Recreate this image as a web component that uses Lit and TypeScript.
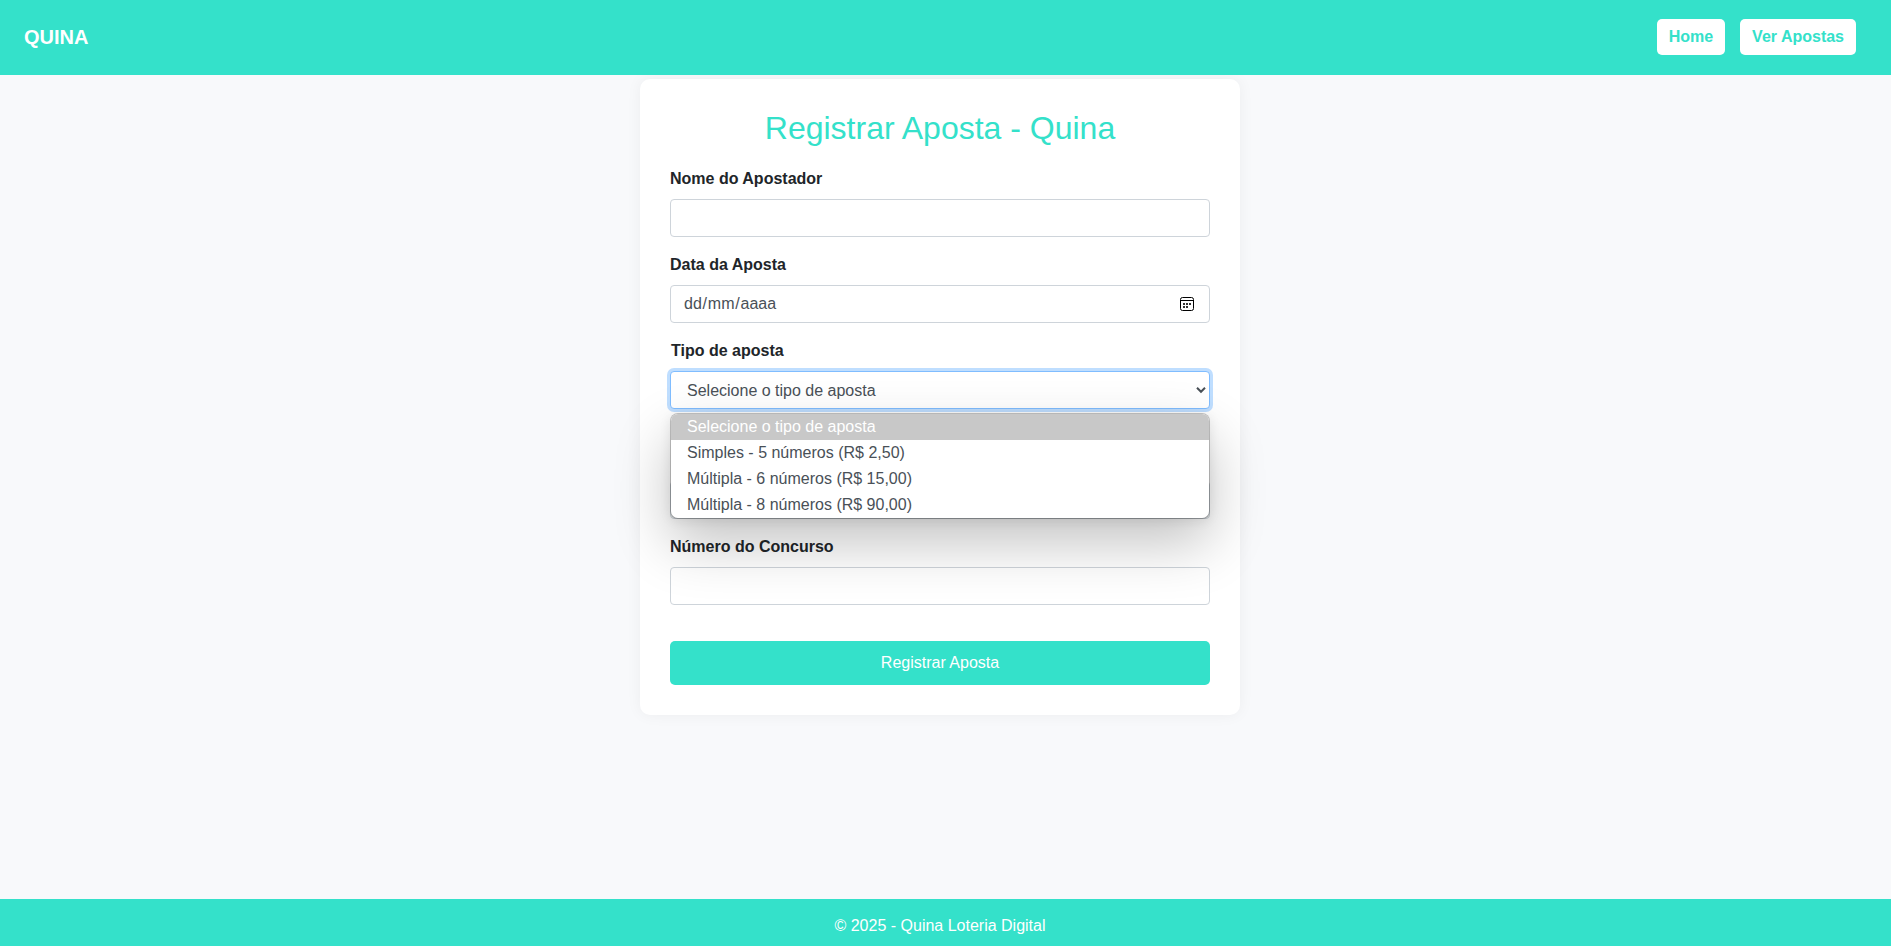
import { LitElement, html, css } from "lit";
import { customElement, state } from "lit/decorators.js";

@customElement("app-root")
export class AppRoot extends LitElement {
  @state() private options = [
    "Selecione o tipo de aposta",
    "Simples - 5 números (R$ 2,50)",
    "Múltipla - 6 números (R$ 15,00)",
    "Múltipla - 8 números (R$ 90,00)",
  ];

  @state() private selected = 0;

  static styles = css`
    :host {
      display: flex;
      flex-direction: column;
      height: 100vh;
      overflow: hidden;
      background: #f8f9fb;
      color: #212529;
      font: 16px/24px "Liberation Sans", Arial, sans-serif;
    }
    * {
      box-sizing: border-box;
    }
    .header {
      flex: none;
      height: 75px;
      padding: 0 35px 1px 24px;
      display: flex;
      align-items: center;
      justify-content: space-between;
      background: #34e1ca;
    }
    .brand {
      color: #fff;
      font-size: 20px;
      font-weight: 700;
    }
    .nav {
      display: flex;
      gap: 15px;
    }
    .link {
      padding: 6px 12px;
      border-radius: 5px;
      background: #fff;
      color: #34e1ca;
      font-weight: 700;
      text-decoration: none;
    }
    .main {
      flex: 1;
      min-height: 0;
      padding: 4px 11px 0 0;
      overflow: hidden;
    }
    .card {
      width: 600px;
      height: 636px;
      margin: 0 auto;
      padding: 30px;
      border-radius: 10px;
      background: #fff;
      box-shadow: 0 0 15px rgba(0, 0, 0, 0.05);
    }
    .title {
      margin: 0 0 20px;
      color: #34e1ca;
      font-size: 32px;
      font-weight: 400;
      line-height: 38px;
      text-align: center;
    }
    .field {
      position: relative;
      margin-bottom: 16px;
    }
    .label {
      display: block;
      margin-bottom: 8px;
      font-weight: 700;
    }
    .label.indent {
      padding-left: 1px;
    }
    .label.tall {
      height: 48px;
    }
    .control {
      display: flex;
      align-items: center;
      justify-content: space-between;
      width: 100%;
      height: 38px;
      padding: 0 12px;
      border: 1px solid #ced4da;
      border-radius: 4px;
      outline: none;
      background: #fff;
      color: #495057;
      font: inherit;
    }
    .control.date {
      padding: 0 15px 0 13px;
    }
    .slash {
      padding: 0 0.8px;
    }
    .control.focused {
      padding: 0 3px 0 16px;
      border-color: #80bdff;
      box-shadow: 0 0 0 3px rgba(0, 123, 255, 0.25);
    }
    .value {
      padding-top: 2px;
    }
    .control.readonly {
      background: #e9ecef;
    }
    .icon {
      display: block;
      flex: none;
    }
    .menu {
      position: absolute;
      z-index: 2;
      top: 74px;
      left: 0;
      right: 0;
      margin: 0;
      padding: 0;
      list-style: none;
      border: 1px solid rgba(0, 0, 0, 0.22);
      border-radius: 8px;
      background: #fff;
      background-clip: padding-box;
      box-shadow: 0 24px 56px rgba(0, 0, 0, 0.24), 0 2px 12px rgba(0, 0, 0, 0.08);
      color: #495057;
      overflow: hidden;
    }
    .option {
      height: 26px;
      padding-left: 16px;
      line-height: 26px;
    }
    .option.selected {
      background: #c8c8c8;
      color: #fff;
    }
    .submit {
      display: block;
      width: 100%;
      height: 44px;
      margin-top: 36px;
      padding: 0;
      border: 0;
      border-radius: 5px;
      background: #34e1ca;
      color: #fff;
      font: inherit;
    }
    .footer {
      flex: none;
      height: 47px;
      padding: 15px 11px 0 0;
      background: #34e1ca;
      color: #fff;
      text-align: center;
    }
  `;

  render() {
    return html`
      <header class="header">
        <span class="brand">QUINA</span>
        <nav class="nav">
          <a class="link">Home</a>
          <a class="link">Ver Apostas</a>
        </nav>
      </header>
      <main class="main">
        <section class="card">
          <h2 class="title">Registrar Aposta - Quina</h2>
          <div class="field">
            <label class="label">Nome do Apostador</label>
            <input class="control" type="text" />
          </div>
          <div class="field">
            <label class="label">Data da Aposta</label>
            <div class="control date">
              <span>dd<span class="slash">/</span>mm<span class="slash">/</span>aaaa</span>
              <svg class="icon" width="14" height="14" viewBox="0 0 14 14">
                <rect x="0.5" y="0.5" width="13" height="13" rx="2" fill="none" stroke="#000" stroke-width="1" />
                <path d="M1 3.5H13" stroke="#000" stroke-width="1" />
                <path
                  d="M3 6h2v2H3zM6 6h2v2H6zM9 6h2v2H9zM3 9h2v2H3zM6 9h2v2H6z"
                  fill="#333"
                />
              </svg>
            </div>
          </div>
          <div class="field">
            <label class="label indent">Tipo de aposta</label>
            <div class="control focused">
              <span class="value">${this.options[this.selected]}</span>
              <svg class="icon" width="10" height="8" viewBox="0 0 10 8">
                <path d="M1 1.8L5 5.8L9 1.8" fill="none" stroke="#495057" stroke-width="2" />
              </svg>
            </div>
            <ul class="menu">
              ${this.options.map(
                (text, i) => html`
                  <li
                    class="option ${i === this.selected ? "selected" : ""}"
                    @click=${() => (this.selected = i)}
                  >${text}</li>
                `
              )}
            </ul>
          </div>
          <div class="field">
            <span class="label tall"></span>
            <div class="control readonly"></div>
          </div>
          <div class="field">
            <label class="label">Número do Concurso</label>
            <input class="control" type="text" />
          </div>
          <button class="submit">Registrar Aposta</button>
        </section>
      </main>
      <footer class="footer">© 2025 - Quina Loteria Digital</footer>
    `;
  }
}
